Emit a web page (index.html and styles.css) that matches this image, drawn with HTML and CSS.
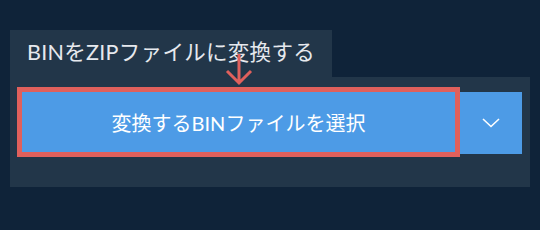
FILE: index.html
```html
<!DOCTYPE html>
<html lang="ja">
<head>
<meta charset="utf-8">
<link rel="stylesheet" href="styles.css">
</head>
<body>
<div class="wrap">
  <div class="tab">BINをZIPファイルに変換する</div>
  <div class="panel">
    <div class="select">変換するBINファイルを選択</div>
    <div class="drop">
      <svg width="18" height="10" viewBox="0 0 18 10"><path d="M1 1 L9 8.5 L17 1" fill="none" stroke="#fff" stroke-width="1.6"/></svg>
    </div>
  </div>
  <svg class="arrow" width="30" height="32" viewBox="0 0 30 32"><path d="M15 0 V29 M3 17 L15 29 L27 17" fill="none" stroke="#e0605c" stroke-width="3"/></svg>
</div>
</body>
</html>
```
FILE: styles.css
```css
html, body {
  margin: 0;
  padding: 0;
  background: #0f2339;
  width: 540px;
  height: 230px;
  overflow: hidden;
}
.wrap {
  position: relative;
  padding: 30px 10px 0 10px;
  font-family: Lato, "Noto Sans CJK JP", sans-serif;
}
.tab {
  width: 322px;
  height: 47px;
  box-sizing: border-box;
  padding: 7px 0 0 17px;
  background: #223649;
  color: #e6e9ee;
  font-size: 21.5px;
  letter-spacing: 0.3px;
  line-height: 30px;
}
.panel {
  width: 520px;
  box-sizing: border-box;
  background: #223649;
  padding: 15px 8px 33px 12px;
  display: flex;
  align-items: flex-start;
}
.select {
  width: 433px;
  height: 60px;
  background: #4d9be6;
  outline: 5px solid #e0605c;
  color: #fff;
  font-size: 20px;
  display: flex;
  align-items: center;
  justify-content: center;
}
.drop {
  width: 62px;
  height: 62px;
  margin-left: 5px;
  background: #4d9be6;
  display: flex;
  align-items: center;
  justify-content: center;
}
.drop svg {
  margin-top: -1px;
}
.arrow {
  position: absolute;
  left: 224px;
  top: 54px;
}
```
